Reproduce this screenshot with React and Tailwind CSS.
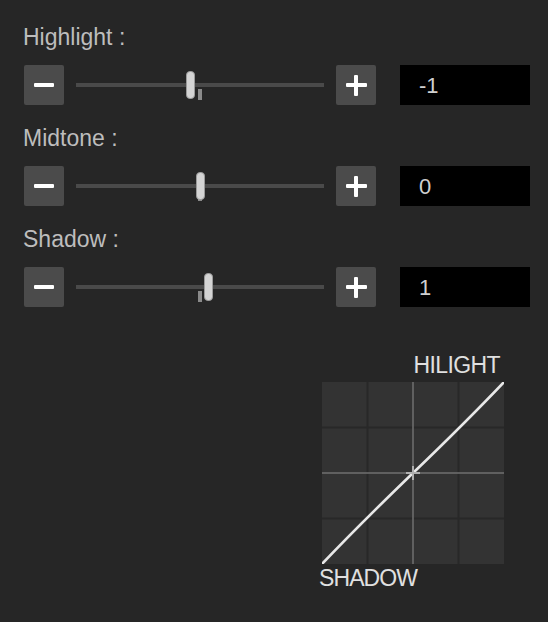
const rows = [
  { label: 'Highlight :', value: '-1', thumb: 110 },
  { label: 'Midtone :', value: '0', thumb: 120 },
  { label: 'Shadow :', value: '1', thumb: 128 },
]

function MinusButton() {
  return (
    <button className="flex h-10 w-10 items-center justify-center rounded-[2px] bg-[#4b4b4b]">
      <span className="block h-[4px] w-5 rounded-[1px] bg-white" />
    </button>
  )
}

function PlusButton() {
  return (
    <button className="relative flex h-10 w-10 items-center justify-center rounded-[2px] bg-[#4b4b4b]">
      <span className="absolute h-[4px] w-[21px] rounded-[1px] bg-white" />
      <span className="absolute h-[21px] w-[4px] rounded-[1px] bg-white" />
    </button>
  )
}

function Slider({ thumb }) {
  return (
    <div className="relative h-10 w-[272px] px-3">
      <div className="relative h-10 w-[248px]">
        <div className="absolute left-0 right-0 top-[18px] h-[4px] bg-[#4a4a4a]" />
        <div className="absolute left-[122px] top-[24px] h-[11px] w-[4px] bg-[#8a8a8a]" />
        <div
          className="absolute top-[6px] h-[28px] w-[9px] rounded-[4px] border border-[#9a9a9a] bg-[#d4d4d4]"
          style={{ left: thumb }}
        />
      </div>
    </div>
  )
}

function Curve() {
  const dark = '#282828'
  return (
    <svg width="182" height="182" viewBox="0 0 182 182" className="block">
      <rect x="0" y="0" width="182" height="182" fill="#333333" />
      <line x1="45.5" y1="0" x2="45.5" y2="182" stroke={dark} strokeWidth="2" />
      <line x1="136.5" y1="0" x2="136.5" y2="182" stroke={dark} strokeWidth="2" />
      <line x1="0" y1="45.5" x2="182" y2="45.5" stroke={dark} strokeWidth="2" />
      <line x1="0" y1="136.5" x2="182" y2="136.5" stroke={dark} strokeWidth="2" />
      <line x1="91" y1="0" x2="91" y2="182" stroke="#707070" strokeWidth="1.5" />
      <line x1="0" y1="91" x2="182" y2="91" stroke="#707070" strokeWidth="1.5" />
      <path d="M0 182 Q 36 144 91 91 T 182 0" fill="none" stroke="#e8e8e8" strokeWidth="2.6" />
      <line x1="84" y1="91" x2="98" y2="91" stroke="#b0b0b0" strokeWidth="2" />
      <line x1="91" y1="84" x2="91" y2="98" stroke="#b0b0b0" strokeWidth="2" />
    </svg>
  )
}

export default function App() {
  return (
    <div
      className="min-h-[622px] w-[548px] bg-[#262626] pl-6 pt-6"
      style={{ fontFamily: '"Liberation Sans", Arial, sans-serif' }}
    >
      <div className="flex flex-col gap-5">
        {rows.map((r) => (
          <div key={r.label} className="flex flex-col">
            <div className="-ml-[1px] text-[23px] leading-[26px] text-[#bdbdbd]">{r.label}</div>
            <div className="mt-[15px] flex items-center">
              <MinusButton />
              <Slider thumb={r.thumb} />
              <PlusButton />
              <div className="ml-6 flex h-10 w-[130px] items-center bg-black pl-[19px] text-[22px] text-[#d0d0d0]">
                {r.value}
              </div>
            </div>
          </div>
        ))}
      </div>

      <div className="ml-[298px] mt-[45px] flex w-[182px] flex-col">
        <div className="pr-1 text-right text-[23px] leading-[26px] tracking-[-0.6px] text-[#e0e0e0]">HILIGHT</div>
        <div className="mt-[4px]">
          <Curve />
        </div>
        <div className="-ml-[3px] mt-[1px] text-[23px] leading-[26px] tracking-[-0.9px] text-[#e0e0e0]">SHADOW</div>
      </div>
    </div>
  )
}
